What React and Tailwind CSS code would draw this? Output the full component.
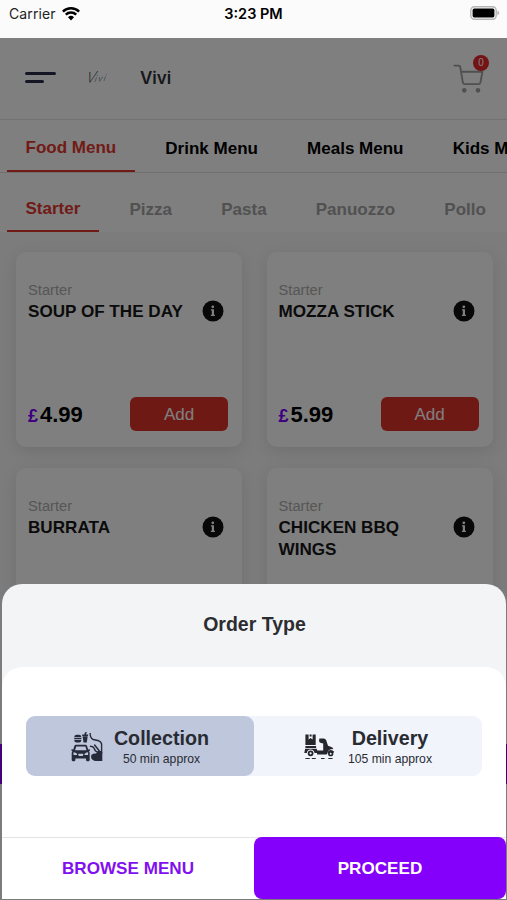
import clsx from 'clsx'

const menus = ['Food Menu', 'Drink Menu', 'Meals Menu', 'Kids Menu']
const categories = ['Starter', 'Pizza', 'Pasta', 'Panuozzo', 'Pollo']

const items = [
  { name: 'SOUP OF THE DAY', price: '4.99' },
  { name: 'MOZZA STICK', price: '5.99' },
  { name: 'BURRATA' },
  { name: 'CHICKEN BBQ WINGS' }
]

const WifiIcon = () => (
  <svg width="18" height="14" viewBox="0 0 18 14" fill="none" stroke="#000" strokeWidth="2.5">
    <path d="M.9 4.6a11.5 11.5 0 0 1 16.2 0" />
    <path d="M3.8 7.7a7.4 7.4 0 0 1 10.4 0" />
    <path d="M6 10.3a4.3 4.3 0 0 1 6 0l-3 3.1z" fill="#000" stroke="none" />
  </svg>
)

const BatteryIcon = () => (
  <svg width="30" height="14" viewBox="0 0 30 14">
    <rect x=".8" y=".8" width="25.4" height="12.4" rx="3.6" fill="#fbfbfb" stroke="#b5b5b5" strokeWidth="1.4" />
    <rect x="2.6" y="2.6" width="21.8" height="8.8" rx="1.6" fill="#000" />
    <path d="M27.4 4.8c2.4.6 2.4 3.8 0 4.4z" fill="#b5b5b5" />
  </svg>
)

const CartIcon = () => (
  <svg width="31" height="30" viewBox="0 0 31 30" fill="none" stroke="#a0a0a0" strokeWidth="1.9" strokeLinecap="round" strokeLinejoin="round">
    <path d="M1.3 1.6h4.4q1.3 0 1.5 1.3l2.6 15.2q.4 2 2.3 2h13.2q1.8 0 2.2-1.9l1.9-10.4H8.1" />
    <circle cx="11.3" cy="26.3" r="1.4" fill="#a0a0a0" />
    <circle cx="25" cy="26.3" r="1.4" fill="#a0a0a0" />
  </svg>
)

const InfoIcon = () => (
  <svg width="22" height="22" viewBox="0 0 22 22">
    <circle cx="11" cy="11" r="10.5" fill="#111" />
    <circle cx="10.8" cy="6.8" r="1.4" fill="#fff" />
    <path d="M8.9 9.3h3.1v5.5h.9v1.2H8.9v-1.2h.9v-4.3h-.9z" fill="#fff" />
  </svg>
)

const CollectionIcon = () => (
  <svg width="32" height="30" viewBox="0 0 32 30" fill="#272a38">
    {/* burger and drink */}
    <path d="M3.2 5q.2-2.2 2.7-2.2h1.9q2.4 0 2.6 2.2zM3.2 5.7h7.2v1.5H3.2zM3.2 8h7.2q0 2.4-1.9 2.4H5.1Q3.2 10.4 3.2 8z" />
    <path d="M11.2 2.4h2.1l.8-2.2 1.7-.1-.7 2.3h2v1.5h-5.9zM11.6 4.3h5.1l-.9 6.2h-3.3z" />
    {/* car */}
    <path
      fillRule="evenodd"
      d="M5.2 12.8h9q1.5 0 1.9 1.3l1 3.5 1.8-.3v1.5l-.9.5q.7.8.7 2v6.8q0 1.1-1.1 1.1h-1.5q-1.1 0-1.1-1.1v-1.5H4.4v1.5q0 1.1-1.1 1.1H1.8q-1.1 0-1.1-1.1v-6.8q0-1.2.7-2l-.9-.5v-1.5l1.8.3 1-3.5q.4-1.3 1.9-1.3zM5.2 14.4l-1.1 3.8h11.4l-1.1-3.8zM2.5 20.3v2.7h3.7q-.4-2.7-3.7-2.7zM17.1 20.3q-3.3 0-3.7 2.7h3.7zM7.1 21.7h5.4l-.7 2.4H7.8z"
    />
    {/* arm and hand reaching over */}
    <path d="M19.2 1q-.4 4.9 3 6.5l5.6 1.3q2.8.9 2.8 3.8v9" fill="none" stroke="#272a38" strokeWidth="1.4" />
    <path d="M19.5 14.2q3 .2 3.8 2.4l1 2.2 3.8 2.2M23.6 13l4.4 5.5" fill="none" stroke="#272a38" strokeWidth="1.5" strokeLinecap="round" />
    <path d="M20.8 22.6q1.6-1.4 4.2-1.2l2.2-2.3q2.4-.8 4.1 1.2V29h-7q-3.5-.8-4.2-3.6-.2-1.6.7-2.8z" />
  </svg>
)

const DeliveryIcon = () => (
  <svg width="31" height="26" viewBox="0 0 31 26" fill="#26272c">
    <path d="M1.4.4h3.2v5l2-1.3 2 1.3v-5h3.1v10.7H1.4zM5.6.4h2v2h-2zM1.4 12h10.7v1.9H1.4zM1.1 14.8h11.6l1.3 4.3h-3.4q-.7-3.7-4-3.7t-3.8 3.7H.3z" />
    <path d="M15.4 4.6h4.2q2 0 2.6 1.6l1.8 5.6 3.4 1.2q1.4.5 1.9 2-5-.1-6.1 4.4l-.6 1.2h-9.4l-.6-4.1h6.6V9.6l-2.2-.5q-1.7-.5-2-2z" />
    <path d="M23.5 19.6q.3-3.5 3.4-3.5 1.9 0 3.3 1.7l-.6 1.3q-1-1.3-2.6-1.3-1.7 0-2.1 1.8z" />
    <circle cx="6.6" cy="19.3" r="2" fill="none" stroke="#26272c" strokeWidth="1.8" />
    <circle cx="26.7" cy="19.7" r="1.8" fill="none" stroke="#26272c" strokeWidth="1.7" />
    <path d="M1.8 24.5h3.6M8.2 24.5h3.2M17.4 24.5h2.8M24.7 24.5h3.5" stroke="#26272c" strokeWidth="1" strokeLinecap="round" />
  </svg>
)

const StatusBar = () => (
  <div className="flex h-[38px] items-start justify-between bg-[#fbfbfb] pt-[4px] pr-[7px] pl-[7px] font-['Inter',sans-serif] text-[14px] leading-[20px] text-[#222]">
    <div className="flex w-[90px] items-center gap-[6px] pl-[2px]">
      <span className="tracking-[0.1px]">Carrier</span>
      <WifiIcon />
    </div>
    <span className="text-[14.5px] font-semibold text-black">3:23 PM</span>
    <div className="flex w-[90px] justify-end pt-[2px]">
      <BatteryIcon />
    </div>
  </div>
)

const Header = () => (
  <header className="flex h-[82px] items-center border-b border-[#e4e4e4] bg-white pr-[23px] pl-[25px]">
    <div className="-mt-[2px] flex w-[62px] flex-col gap-[5px]">
      <span className="h-[3px] w-[31px] rounded-full bg-[#282c48]" />
      <span className="h-[3px] w-[19px] rounded-full bg-[#282c48]" />
    </div>
    <div className="w-[53px] -translate-y-[4px] -rotate-6 font-['Lato',sans-serif] text-[9px] leading-none font-light tracking-[1.5px] text-[#24443f] italic">
      <span className="inline-block -skew-x-[20deg]">
        <span className="text-[15px] tracking-[-0.5px]">V</span>ivi
      </span>
    </div>
    <span className="font-['Inter',sans-serif] text-[17px] font-semibold text-[#2f3037]">Vivi</span>
    <div className="relative ml-auto flex h-[30px] w-[31px]">
      <CartIcon />
      <span className="absolute -top-[9px] -right-[5px] flex size-[16px] items-center justify-center rounded-full bg-[#e8262a] text-[10px] text-white">0</span>
    </div>
  </header>
)

const Tabs = ({ labels, className, active, idle }) => (
  <nav className={clsx('flex gap-[12.2px] overflow-hidden bg-white pl-[7px] text-[17px] leading-[20px] font-bold whitespace-nowrap', className)}>
    {labels.map((label, i) => (
      <div
        key={label}
        className={clsx(
          'flex shrink-0 items-end border-b-[2.5px] px-[18.5px]',
          i === 0 ? ['border-[#e2362f] text-[#e2362f]', active] : ['border-transparent', idle]
        )}
      >
        {label}
      </div>
    ))}
  </nav>
)

const ItemCard = ({ name, price }) => (
  <div className="flex h-[195px] flex-col rounded-[10px] bg-white px-[12px] pt-[29px] pb-[16px] shadow-[0_4px_16px_rgba(0,0,0,0.1)]">
    <span className="text-[14.7px] leading-[18px] text-[#acacac]">Starter</span>
    <div className="flex items-start justify-between pt-[1px] pr-[6px]">
      <h3 className="w-[160px] pt-[1px] text-[17.1px] leading-[22px] font-bold text-[#161616]">{name}</h3>
      <InfoIcon />
    </div>
    {price && (
      <div className="mt-auto flex items-center justify-between pr-[2px]">
        <div className="flex items-baseline gap-[2px] font-bold">
          <span className="text-[18px] text-[#8000ff]">£</span>
          <span className="text-[22px] text-black">{price}</span>
        </div>
        <button className="h-[34px] w-[98px] rounded-[6px] bg-[#df322b] pt-[1px] text-[17px] text-white">Add</button>
      </div>
    )}
  </div>
)

const OrderOption = ({ icon, title, time, active }) => (
  <button
    className={clsx(
      'flex h-[60px] w-1/2 items-center justify-center pt-[2px] text-[#292b32]',
      active ? 'gap-[11px] rounded-[9px] bg-[#bfc7dd]' : 'gap-[13px]'
    )}
  >
    <span>{icon}</span>
    <span className="flex flex-col items-center pt-[1px]">
      <span className="text-[19.7px] leading-[22px] font-bold">{title}</span>
      <span className="text-[12.2px] leading-[20px]">{time}</span>
    </span>
  </button>
)

const OrderTypeSheet = () => (
  <section className="absolute right-[1px] bottom-[1px] left-[2px] flex h-[315px] flex-col overflow-hidden rounded-t-[20px] bg-[#f3f4f6]">
    <h2 className="pt-[28px] pl-[1px] text-center text-[19.5px] leading-[25px] font-bold text-[#2c2d31]">Order Type</h2>
    <div className="mt-[30px] flex flex-1 flex-col rounded-t-[20px] bg-white">
      <div className="mx-[24px] mt-[49px] flex rounded-[9px] bg-[#f2f4fc]">
        <OrderOption icon={<CollectionIcon />} title="Collection" time="50 min approx" active />
        <OrderOption icon={<DeliveryIcon />} title="Delivery" time="105 min approx" />
      </div>
      <div className="mt-auto flex h-[62px] border-t border-[#e3e3e5] text-[17.1px] font-bold">
        <button className="flex-1 text-[#8110f0]">BROWSE MENU</button>
        <button className="-mt-px flex-1 rounded-[8px] bg-[#8500fa] pt-[1px] text-white">PROCEED</button>
      </div>
    </div>
  </section>
)

const App = () => {
  return (
    <div className="relative flex h-[900px] w-[507px] flex-col overflow-hidden bg-[#f8f8f8] font-['Liberation_Sans',Arial,sans-serif]">
      <StatusBar />
      <Header />
      <Tabs labels={menus} className="h-[53px] border-b border-[#e0e0e0]" active="pb-[12px]" idle="pb-[11px] text-black" />
      <Tabs labels={categories} className="h-[59px]" active="pb-[11px]" idle="pb-[10px] text-[#a3a3a3]" />
      <div className="grid grid-cols-2 gap-x-[24.5px] gap-y-[21px] px-[16px] pt-[20px] pr-[14.5px]">
        {items.map((item) => (
          <ItemCard key={item.name} {...item} />
        ))}
      </div>
      <div className="mt-[81px] h-[40px] shrink-0 bg-[#8500fa]" />

      {/* backdrop */}
      <div className="absolute inset-x-0 top-[38px] bottom-0 bg-black/50" />
      <OrderTypeSheet />
    </div>
  )
}

export default App
